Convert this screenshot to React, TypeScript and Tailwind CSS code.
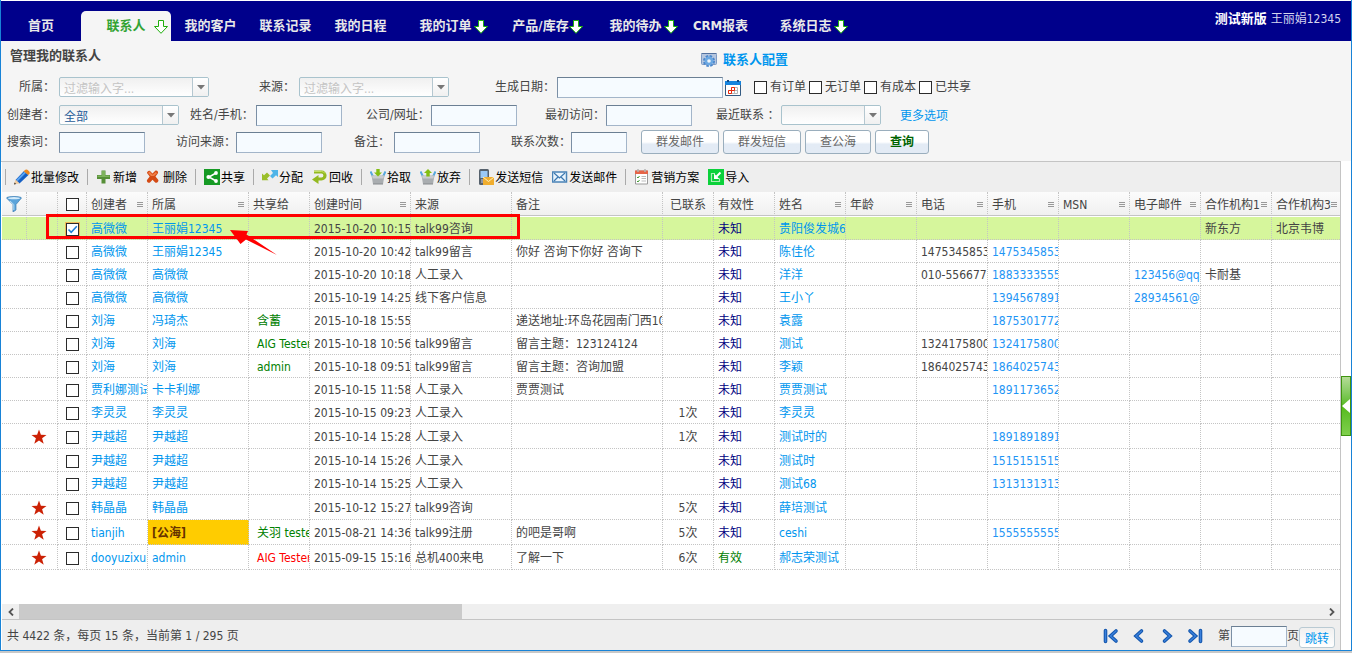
import type { ReactNode } from "react";
import clsx from "clsx";

type NavItem = { label: string; width: string; menu?: boolean };

const NAV: NavItem[] = [
  { label: "我的客户", width: "w-[75px]" },
  { label: "联系记录", width: "w-[75px]" },
  { label: "我的日程", width: "w-[75px]" },
  { label: "我的订单", width: "w-[95px]", menu: true },
  { label: "产品/库存", width: "w-[95px]", menu: true },
  { label: "我的待办", width: "w-[95px]", menu: true },
  { label: "CRM报表", width: "w-[75px]" },
  { label: "系统日志", width: "w-[95px]", menu: true },
];

const COLUMNS: { label: string; width: string; menu?: boolean; center?: boolean }[] = [
  { label: "创建者", width: "w-[61px]", menu: true },
  { label: "所属", width: "w-[101px]", menu: true },
  { label: "共享给", width: "w-[61px]" },
  { label: "创建时间", width: "w-[101px]", menu: true },
  { label: "来源", width: "w-[101px]" },
  { label: "备注", width: "w-[151px]" },
  { label: "已联系", width: "w-[51px]", center: true },
  { label: "有效性", width: "w-[61px]" },
  { label: "姓名", width: "w-[71px]", menu: true },
  { label: "年龄", width: "w-[71px]", menu: true },
  { label: "电话", width: "w-[71px]", menu: true },
  { label: "手机", width: "w-[71px]", menu: true },
  { label: "MSN", width: "w-[71px]", menu: true },
  { label: "电子邮件", width: "w-[71px]", menu: true },
  { label: "合作机构1", width: "w-[71px]", menu: true },
  { label: "合作机构3", width: "", menu: true },
];

type Row = {
  star?: boolean;
  checked?: boolean;
  creator: string;
  owner: string;
  shared?: string;
  time: string;
  source: string;
  note?: string;
  times?: string;
  valid?: boolean;
  name: string;
  tel?: string;
  mobile?: string;
  email?: string;
  org1?: string;
  org3?: string;
};

const ROWS: Row[] = [
  { checked: true, creator: "高微微", owner: "王丽娟12345", time: "2015-10-20 10:15", source: "talk99咨询", name: "贵阳俊发城6", org1: "新东方", org3: "北京韦博" },
  { creator: "高微微", owner: "王丽娟12345", time: "2015-10-20 10:42", source: "talk99留言", note: "你好 咨询下你好 咨询下", name: "陈佳伦", tel: "14753458533", mobile: "14753458533" },
  { creator: "高微微", owner: "高微微", time: "2015-10-20 10:18", source: "人工录入", name: "洋洋", tel: "010-5566778", mobile: "18833335555", email: "123456@qq.com", org1: "卡耐基" },
  { creator: "高微微", owner: "高微微", time: "2015-10-19 14:25", source: "线下客户信息", name: "王小丫", mobile: "13945678912", email: "28934561@qq.com" },
  { creator: "刘海", owner: "冯琦杰", shared: "含蓄", time: "2015-10-18 15:55", source: "", note: "递送地址:环岛花园南门西100", name: "袁露", mobile: "18753017722" },
  { creator: "刘海", owner: "刘海", shared: "AIG Tester", time: "2015-10-18 10:56", source: "talk99留言", note: "留言主题：123124124", name: "测试", tel: "13241758000", mobile: "13241758000" },
  { creator: "刘海", owner: "刘海", shared: "admin", time: "2015-10-18 09:51", source: "talk99留言", note: "留言主题：咨询加盟", name: "李颖", tel: "18640257433", mobile: "18640257433" },
  { creator: "贾利娜测试", owner: "卡卡利娜", time: "2015-10-15 11:58", source: "人工录入", note: "贾贾测试", name: "贾贾测试", mobile: "18911736522" },
  { creator: "李灵灵", owner: "李灵灵", time: "2015-10-15 09:23", source: "人工录入", times: "1次", name: "李灵灵" },
  { star: true, creator: "尹越超", owner: "尹越超", time: "2015-10-14 15:28", source: "人工录入", times: "1次", name: "测试时的", mobile: "18918918911" },
  { creator: "尹越超", owner: "尹越超", time: "2015-10-14 15:26", source: "人工录入", name: "测试时", mobile: "15151515155" },
  { creator: "尹越超", owner: "尹越超", time: "2015-10-14 15:25", source: "人工录入", name: "测试68", mobile: "13131313133" },
  { star: true, creator: "韩晶晶", owner: "韩晶晶", time: "2015-10-12 15:27", source: "talk99咨询", times: "5次", name: "薛培测试" },
  { star: true, creator: "tianjih", owner: "[公海]", shared: "关羽 tester", time: "2015-08-21 14:36", source: "talk99注册", note: "的吧是哥啊", times: "5次", name: "ceshi", mobile: "15555555555" },
  { star: true, creator: "dooyuzixun", owner: "admin", shared: "AIG Tester", time: "2015-09-15 15:16", source: "总机400来电", note: "了解一下", times: "6次", valid: true, name: "郝志荣测试" },
];

function DownArrow({ hollow }: { hollow?: boolean }) {
  return (
    <svg
      viewBox="0 0 14 14"
      className={clsx("absolute top-[9px] h-[14px] w-[14px]", hollow ? "right-[3px]" : "right-[5px]")}
      aria-hidden="true"
    >
      <path d="M4.5.5h5v6h4L7 13.3.5 6.500h4z" fill="#fff" stroke="#1fae0b" />
    </svg>
  );
}

function TextField({ id, label, gap, labelWidth, width }: { id: string; label: string; gap: string; labelWidth: string; width: string }) {
  return (
    <div className={clsx("flex shrink-0 items-center", gap)}>
      <label htmlFor={id} className={clsx("whitespace-nowrap", labelWidth)}>{label}</label>
      <input
        id={id}
        type="text"
        className={clsx("h-[21px] border border-[#a3b5c9] border-t-[#6b7f93] border-l-[#7b8fa5] bg-[#f6fbff] px-1 outline-none", width)}
      />
    </div>
  );
}

function ArrowBox() {
  return (
    <span className="flex h-full w-4 items-center justify-center border-l border-[#b5c7d0] bg-gradient-to-b from-white to-[#f0f0f0]">
      <svg viewBox="0 0 8 5" className="h-[5px] w-2" aria-hidden="true">
        <path d="M0 0h8L4 4.6z" fill="#777" />
      </svg>
    </span>
  );
}

const COMBO = "relative flex h-5 overflow-hidden rounded-[2px] border border-[#a9c3cd] bg-gradient-to-b from-[#f0f0f0] to-white";

function FilterCombo({ id, label, gap }: { id: string; label: string; gap: string }) {
  return (
    <div className={clsx("flex shrink-0 items-center", gap)}>
      <label htmlFor={id} className="w-10 whitespace-nowrap">{label}</label>
      <div className={clsx(COMBO, "w-[150px]")}>
        <input id={id} type="text" placeholder="过滤输入字..." className="min-w-0 flex-1 px-1 pt-[3px] outline-none placeholder:text-[#c4c4c4]" />
        <button type="button" aria-label={label}><ArrowBox /></button>
      </div>
    </div>
  );
}

function SelectCombo({ id, label, gap, labelWidth, width, option }: { id: string; label: string; gap: string; labelWidth: string; width: string; option: string }) {
  return (
    <div className={clsx("flex shrink-0 items-center", gap)}>
      <label htmlFor={id} className={clsx("whitespace-nowrap", labelWidth)}>{label}</label>
      <div className={clsx(COMBO, width)}>
        <select id={id} className="min-w-0 flex-1 appearance-none px-1 pt-[3px] text-[#1f5b98] outline-none">
          <option>{option}</option>
        </select>
        <span className="pointer-events-none absolute inset-y-0 right-0"><ArrowBox /></span>
      </div>
    </div>
  );
}

const BOX = "block h-[13px] w-[13px] shrink-0 appearance-none border border-[#2b2b2b] bg-white";

function Flag({ label }: { label: string }) {
  return (
    <label className="flex shrink-0 items-center gap-[3px]">
      <input type="checkbox" className={BOX} />
      {label}
    </label>
  );
}

function FormButton({ children, strong }: { children: ReactNode; strong?: boolean }) {
  return (
    <button
      type="button"
      className={clsx(
        "h-6 shrink-0 rounded-[3px] border border-[#9aaebd] bg-gradient-to-b from-white from-50% to-[#e3ebf5] to-60% px-[14px] whitespace-nowrap",
        strong ? "font-bold text-[#006400]" : "text-[#666]"
      )}
    >
      {children}
    </button>
  );
}

function Tool({ label, children }: { label: string; children: ReactNode }) {
  return (
    <button type="button" className="flex shrink-0 items-center gap-px text-black">
      <svg viewBox="0 0 16 16" className="h-4 w-4" aria-hidden="true">{children}</svg>
      <span className="pt-[2px]">{label}</span>
    </button>
  );
}

function Sep() {
  return <span className="-mx-px h-4 w-px shrink-0 bg-[#aaa]" />;
}

function Basket({ arrow }: { arrow: string }) {
  return (
    <>
      <path d="M.5 2.500L3 7.500M15.500 2.500L13 7.500" stroke="#55a8de" strokeWidth="2" />
      <path d="M1.500 6.500h13L13 15H3z" fill="#a9adb0" />
      <path d="M2 6.500h12l-.6 3H2.600z" fill="#c9cccf" />
      <path d="M3 15h10" stroke="#85898d" />
      <path d={arrow} fill="#83be12" />
    </>
  );
}

function Toolbar() {
  return (
    <div className="flex h-[30px] items-center gap-[9px] overflow-hidden bg-[#eee] pl-1">
      <Sep />
      <Tool label="批量修改">
        <path d="M1.500 11L10 2l4.500 4-9 8.500z" fill="#1660c4" />
        <path d="M3 11.500L11.500 3" stroke="#5ba5f2" strokeWidth="1.800" />
        <path d="M0 15.500L1.500 10.500l4 4z" fill="#f1cda2" />
        <path d="M0 15.500l.6-2 1.500 1.400z" fill="#333" />
        <path d="M11 1c1.500-2 6 2 4.500 3.700l-1.300 1.400L9.700 2.300z" fill="#ef8a1f" />
      </Tool>
      <Sep />
      <Tool label="新增">
        <path d="M5.500 1.500h4v4.500H14v4H9.500v4.500h-4V10H1V6h4.500z" fill="#578f38" />
        <path d="M6 2h3v4.500h4.500V8h-12V6.500H6z" fill="#7eb35c" />
      </Tool>
      <Tool label="删除">
        <path d="M1 4c0-1.500 2-3 3-2l2.500 2.500L9 2c1.500-1.500 4 1 2.800 2.500L9.500 7.500l2.700 3.200c1 1.500-1.500 4-3 2.800L6.500 10.800 4 13.500c-1.500 1.200-4-1-2.800-2.700l2.500-3.300z" fill="#d44a14" />
        <path d="M2 4l1.500-1.500 3 3.200L9.800 3 11 4.300 8 7H5z" fill="#f07f48" />
      </Tool>
      <Sep />
      <Tool label="共享">
        <path d="M0 0h16v16H0z" fill="#169a24" />
        <path d="M12 4L5 8l7 4" fill="none" stroke="#fff" strokeWidth="1.500" />
        <circle cx="12" cy="4" r="1.900" fill="#fff" />
        <circle cx="4.500" cy="8" r="2.100" fill="#fff" />
        <circle cx="12" cy="12" r="1.900" fill="#fff" />
      </Tool>
      <Sep />
      <Tool label="分配">
        <path d="M0 4.500l2 1.700L5 3.500 8 6.500l-3 3 1.500 1.800H0z" fill="#9bbf2b" />
        <path d="M9 1h7v7l-2-1.700-3.500 3.200L8 7l3-3z" fill="#4fb4e8" />
      </Tool>
      <Tool label="回收">
        <path d="M2 3h7.500a3.500 3.500 0 0 1 0 7H6" fill="none" stroke="#93b920" strokeWidth="3.200" />
        <path d="M6.500 6v9L0 10.500z" fill="#93b920" />
        <path d="M2 2.500h7.500a4 4 0 0 1 3.500 2" fill="none" stroke="#c4df62" />
      </Tool>
      <Sep />
      <Tool label="拾取"><Basket arrow="M6.300 0h3.400v3.500H12L8 7.500 4 3.500h2.300z" /></Tool>
      <Tool label="放弃"><Basket arrow="M8 0l4 4H9.700v3.500H6.300V4H4z" /></Tool>
      <Sep />
      <Tool label="发送短信">
        <rect x="1" y="0" width="10" height="16" rx="1.500" fill="#56616c" />
        <path d="M2.500 2h7v7h-7z" fill="#9bc9f5" />
        <path d="M3 11h2M3 13h2" stroke="#ccd" />
        <path d="M5 8h11v8H5z" fill="#f0ad2e" />
        <path d="M5 8l5.500 4.500L16 8" fill="none" stroke="#fff0bc" />
      </Tool>
      <Tool label="发送邮件">
        <path d="M.5 3h14v10H.5z" fill="#e9f4fd" stroke="#4a83b7" strokeWidth="1.500" />
        <path d="M2 4l5.500 5L13 4M2 12l4-4M13 12L9 8" fill="none" stroke="#3c78b0" strokeWidth="1.200" />
      </Tool>
      <Sep />
      <Tool label="营销方案">
        <path d="M1.500 2h12v13h-12z" fill="#fff" stroke="#999" />
        <path d="M1 1.500h13V5H1z" fill="#e56549" />
        <path d="M4 0v3M11 0v3" stroke="#b4b4b4" strokeWidth="1.500" />
        <path d="M3 8l1 1 1.500-2M3 12l1 1 1.500-2" fill="none" stroke="#439c35" />
        <path d="M7.500 7.500H12M7.500 9.500H12M7.500 12H12" stroke="#bbb" />
      </Tool>
      <Tool label="导入">
        <path d="M0 0h16v16H0z" fill="#0bd13a" />
        <path d="M7 4.500H3.500v8h8V9.500" fill="none" stroke="#a9efb4" strokeWidth="1.200" />
        <path d="M12.500 3.500L8.500 7.500" stroke="#fff" strokeWidth="2" />
        <path d="M6 4.500V10h5.500z" fill="#fff" />
      </Tool>
    </div>
  );
}

function MenuMark() {
  return (
    <svg viewBox="0 0 6 5" className="h-[5px] w-[6px] shrink-0" aria-hidden="true">
      <path d="M0 .5h6M0 2.500h6M0 4.500h6" stroke="#999" />
    </svg>
  );
}

const HEAD = "h-6 border-r border-b border-dotted border-[#c4c4c4] [border-bottom-style:solid] bg-gradient-to-b from-[#fcfcfc] to-[#f0f0f0] p-0 font-normal";
const CELL = "overflow-hidden border-r border-b border-dotted border-[#c4c4c4] p-0 pt-[2px] pl-1 whitespace-nowrap";

function ContactRow({ row, index }: { row: Row; index: number }) {
  const link = "text-[#0096ee]";
  const last = index === ROWS.length - 1;
  return (
    <tr className={clsx(row.star ? "h-[25px]" : "h-[23px]", row.checked && "bg-[#d6f69c]")}>
      <td className={clsx("border-b border-dotted border-[#c4c4c4] p-0", row.checked && "border-r")} />
      <td className={CELL}>
        {row.star && (
          <svg viewBox="0 0 16 16" className="h-4 w-4" role="img" aria-label="星标">
            <path d="M8 .5l1.900 5.200 5.600.2-4.400 3.400 1.600 5.500L8 11.600l-4.700 3.200 1.600-5.500L.5 5.900l5.600-.2z" fill="#cc2105" />
          </svg>
        )}
      </td>
      <td className={clsx(CELL, "pl-2")}>
        <span className="relative block w-[13px]">
          <input
            type="checkbox"
            defaultChecked={row.checked}
            aria-label={row.name}
            className={clsx(BOX, row.checked && "outline outline-[#f0b95a]")}
          />
          {row.checked && (
            <svg viewBox="0 0 13 13" className="pointer-events-none absolute inset-0" aria-hidden="true">
              <path d="M2.500 6.500L5.200 9.300 10.800 3.300" fill="none" stroke="#1e7fd6" strokeWidth="1.600" />
            </svg>
          )}
        </span>
      </td>
      <td className={CELL}><a href="#contact" className={link}>{row.creator}</a></td>
      {row.owner === "[公海]" ? (
        <td className={clsx(CELL, "bg-[#ffcc00] font-bold text-[#663300]")}>{row.owner}</td>
      ) : (
        <td className={CELL}><a href="#owner" className={link}>{row.owner}</a></td>
      )}
      <td className={clsx(CELL, "pl-2", last ? "text-[#f00]" : "text-[#008000]")}>{row.shared}</td>
      <td className={CELL}>{row.time}</td>
      <td className={CELL}>{row.source}</td>
      <td className={CELL}>{row.note}</td>
      <td className={clsx(CELL, "pr-1 text-center")}>{row.times}</td>
      <td className={clsx(CELL, row.valid ? "text-[#008000]" : "text-[#000080]")}>{row.valid ? "有效" : "未知"}</td>
      <td className={CELL}><a href="#contact" className={link}>{row.name}</a></td>
      <td className={CELL} />
      <td className={CELL}>{row.tel}</td>
      <td className={CELL}><a href="#mobile" className="text-[#1e95f5]">{row.mobile}</a></td>
      <td className={CELL} />
      <td className={CELL}><a href="#email" className="text-[#1e95f5]">{row.email}</a></td>
      <td className={CELL}>{row.org1}</td>
      <td className={clsx(CELL, "border-r-0")}>{row.org3}</td>
    </tr>
  );
}

function PageButton({ label, d }: { label: string; d: string }) {
  return (
    <button type="button" aria-label={label} className="flex h-4 w-4 items-center justify-center">
      <svg viewBox="0 0 16 16" className="h-4 w-4" fill="none" strokeLinecap="round" aria-hidden="true">
        <path d={d} stroke="#1457ae" strokeWidth="3.600" />
        <path d={d} stroke="#3a80dc" strokeWidth="1.400" />
      </svg>
    </button>
  );
}

export default function App() {
  return (
    <div className="min-h-screen bg-[#c8c8c8] pb-[2px] font-['DejaVu_Sans_Condensed','Noto_Sans_CJK_SC',sans-serif] text-[12px] leading-4 text-[#444]">
      <div className="flex min-h-[calc(100vh-2px)] flex-col border-x border-b border-[#1883d7] bg-white pt-px">
        <header className="flex h-10 shrink-0 justify-between bg-[#00008b]">
          <nav className="flex items-end text-[13px] font-bold text-[#e8e8e8]">
            <a href="#home" className="h-[30px] w-20 text-center leading-[30px]">首页</a>
            <a href="#contacts" className="relative mr-[2px] h-[30px] w-[90px] rounded-t-[5px] bg-[#f5f5f5] text-center leading-[30px] text-[#33a333]">
              联系人
              <DownArrow hollow />
            </a>
            {NAV.map((item) => (
              <a key={item.label} href="#nav" className={clsx("relative h-[30px] text-center leading-[30px] whitespace-nowrap", item.width)}>
                {item.label}
                {item.menu && <DownArrow />}
              </a>
            ))}
          </nav>
          <p className="flex h-9 items-center gap-1 pr-[10px] text-[#d5d5ee]">
            <b className="text-[13px] text-white">测试新版</b> 王丽娟12345
          </p>
        </header>

        <form className="flex shrink-0 flex-col overflow-hidden bg-[#f5f5f5] pb-[6px]" onSubmit={(e) => e.preventDefault()}>
          <div className="flex h-8 text-[13px] font-bold">
            <h1 className="w-[700px] pt-[7px] pl-[9px]">管理我的联系人</h1>
            <a href="#config" className="flex items-center gap-[6px] pt-[6px] text-[#0096ee]">
              <svg viewBox="0 0 16 16" className="h-4 w-4" aria-hidden="true">
                <rect x=".5" y="1.500" width="15" height="11" rx="1" fill="#b5c6df" stroke="#7f9bc4" />
                <path d="M.5 1.500h15" stroke="#53719f" />
                <circle cx="8" cy="9" r="4.800" fill="none" stroke="#4a86cc" strokeWidth="2.400" strokeDasharray="2.400 1.370" />
                <circle cx="8" cy="9" r="3.100" fill="#f1f6fb" stroke="#6ba8e2" strokeWidth="2.600" />
              </svg>
              联系人配置
            </a>
          </div>

          <div className="flex h-7 items-center">
            <FilterCombo id="owner" label="所属：" gap="ml-[18px]" />
            <FilterCombo id="source" label="来源：" gap="ml-[50px]" />
            <TextField id="created" label="生成日期：" gap="ml-[46px]" labelWidth="w-[62px]" width="w-[166px]" />
            <button type="button" aria-label="选择日期" className="mr-[13px] ml-[2px] shrink-0 pt-[2px]">
              <svg viewBox="0 0 16 16" className="h-4 w-4" aria-hidden="true">
                <path d="M.5 1.500h15v14H.5z" fill="#fff" stroke="#345b82" />
                <path d="M0 1h16v4H0z" fill="#1684de" />
                <path d="M2 0h2v2H2zM12 0h2v2h-2z" fill="#124a84" />
                <path d="M6.500 7.500h6v6h-9v-3h9M9.500 7.500v6M6.500 7.500v6" fill="none" stroke="#b5b5b5" />
                <path d="M3.500 10.500h3v3h-3zM6.500 10.500v-3h3v3z" fill="none" stroke="#e8290b" />
              </svg>
            </button>
            <div className="flex gap-[3px]">
              <Flag label="有订单" />
              <Flag label="无订单" />
              <Flag label="有成本" />
              <Flag label="已共享" />
            </div>
          </div>

          <div className="flex h-7 items-center">
            <SelectCombo id="creator" label="创建者：" gap="ml-[6px]" labelWidth="w-[52px]" width="w-[120px]" option="全部" />
            <TextField id="name" label="姓名/手机：" gap="ml-[11px]" labelWidth="w-[66px]" width="w-[86px]" />
            <TextField id="company" label="公司/网址：" gap="ml-6" labelWidth="w-[65px]" width="w-[86px]" />
            <TextField id="first" label="最初访问：" gap="ml-7" labelWidth="w-[61px]" width="w-[86px]" />
            <SelectCombo id="recent" label="最近联系 ：" gap="ml-6" labelWidth="w-[65px]" width="w-[100px]" option="" />
            <a href="#more" className="ml-[19px] shrink-0 pt-[2px] text-[#0096ee]">更多选项</a>
          </div>

          <div className="flex h-[26px] items-center">
            <TextField id="keyword" label="搜索词：" gap="ml-[6px]" labelWidth="w-[52px]" width="w-[86px]" />
            <TextField id="referrer" label="访问来源：" gap="ml-[31px]" labelWidth="w-[60px]" width="w-[86px]" />
            <TextField id="remark" label="备注：" gap="ml-8" labelWidth="w-10" width="w-[86px]" />
            <TextField id="count" label="联系次数：" gap="ml-[31px]" labelWidth="w-[60px]" width="w-[56px]" />
            <div className="ml-[14px] flex gap-1">
              <FormButton>群发邮件</FormButton>
              <FormButton>群发短信</FormButton>
              <FormButton>查公海</FormButton>
              <FormButton strong>查询</FormButton>
            </div>
          </div>
        </form>

        <div className="flex flex-1">
          <main className="flex min-w-0 flex-1 flex-col border-t border-r border-[#c4c4c4] pl-px">
            <Toolbar />
            <div className="relative flex-1 overflow-hidden">
              <table className="w-full table-fixed border-separate border-spacing-0 text-left">
                <thead>
                  <tr>
                    <th className={clsx(HEAD, "w-[25px] pl-1")}>
                      <svg viewBox="0 0 16 16" className="h-4 w-4" role="img" aria-label="筛选">
                        <path d="M.5 2c0-2 15-2 15 0L10 8.500V14l-3 2V8.500z" fill="#5ca4da" stroke="#3c7eb5" strokeWidth=".7" />
                        <ellipse cx="8" cy="2.200" rx="6" ry="1.100" fill="#d4ebfa" />
                        <path d="M4 5l3.800 3.500V14" fill="none" stroke="#b5dcf5" />
                      </svg>
                    </th>
                    <th className={clsx(HEAD, "w-[31px]")} />
                    <th className={clsx(HEAD, "w-[29px] pt-[2px] pl-2")}>
                      <input type="checkbox" aria-label="全选" className={BOX} />
                    </th>
                    {COLUMNS.map((col) => (
                      <th key={col.label} className={clsx(HEAD, "pt-[2px] last:border-r-0", col.width)}>
                        <div className={clsx("flex items-center pr-1 pl-1 whitespace-nowrap", col.center ? "justify-center" : "justify-between")}>
                          {col.label}
                          {col.menu && <MenuMark />}
                        </div>
                      </th>
                    ))}
                  </tr>
                </thead>
                <tbody className="before:block before:h-px before:content-['']">
                  {ROWS.map((row, i) => (
                    <ContactRow key={row.time} row={row} index={i} />
                  ))}
                </tbody>
              </table>

              {/* Highlight drawn over the selected contact */}
              <div className="pointer-events-none absolute top-[22px] left-11 h-[25px] w-[474px] border-3 border-[#f00]" />
              <svg viewBox="0 0 48 26" className="pointer-events-none absolute top-[38px] left-[228px] h-[26px] w-12" aria-hidden="true">
                <path d="M0 0l18 1-1.500 3.500L47 25 16 9.500 10.500 14z" fill="#f00" />
              </svg>
            </div>

            <div className="flex h-4 items-center border-b border-[#c4c4c4] bg-[#efefef]">
              <button type="button" aria-label="向左滚动" className="flex w-[17px] justify-center">
                <svg viewBox="0 0 8 8" className="h-2 w-2" aria-hidden="true"><path d="M6 .5L2.500 4 6 7.500" fill="none" stroke="#555" strokeWidth="1.800" /></svg>
              </button>
              <div className="h-full flex-1">
                <div className="h-full w-[34%] bg-[#cacaca]" />
              </div>
              <button type="button" aria-label="向右滚动" className="flex w-[17px] justify-center">
                <svg viewBox="0 0 8 8" className="h-2 w-2" aria-hidden="true"><path d="M2 .5L5.500 4 2 7.500" fill="none" stroke="#555" strokeWidth="1.800" /></svg>
              </button>
            </div>

            <footer className="flex h-[30px] items-center justify-between bg-[#eee] px-[5px] pt-[2px]">
              <p>共 4422 条，每页 15 条，当前第 1 / 295 页</p>
              <div className="flex items-center">
                <div className="mr-[15px] flex gap-3">
                  <PageButton label="首页" d="M2.500 2.500v11M13 3L7.500 8l5.500 5" />
                  <PageButton label="上一页" d="M10.500 3L5 8l5.500 5" />
                  <PageButton label="下一页" d="M5.500 3L11 8l-5.500 5" />
                  <PageButton label="末页" d="M13.500 2.500v11M3 3l5.500 5L3 13" />
                </div>
                <label htmlFor="page">第</label>
                <input id="page" type="text" className="ml-px h-[21px] w-14 border border-[#a3b5c9] border-t-[#6b7f93] border-l-[#7b8fa5] bg-[#f6fbff] px-1 outline-none" />
                <span>页</span>
                <button type="button" className="mt-[2px] h-[21px] rounded-[3px] border border-[#b9cad3] bg-gradient-to-b from-[#f0f0f0] to-white px-[5px] pt-[3px] text-[#0096ee]">跳转</button>
              </div>
            </footer>
          </main>

          <aside className="flex w-[10px] shrink-0 items-center">
            <button type="button" aria-label="展开侧栏" className="flex h-[60px] w-full items-center border border-[#3f9410] bg-gradient-to-b from-[#b4dc96] via-[#55ba18] to-[#7fcf4c]">
              <svg viewBox="0 0 8 14" className="h-[14px] w-2" aria-hidden="true"><path d="M8 0v14L0 7z" fill="#fff" /></svg>
            </button>
          </aside>
        </div>
      </div>
    </div>
  );
}
